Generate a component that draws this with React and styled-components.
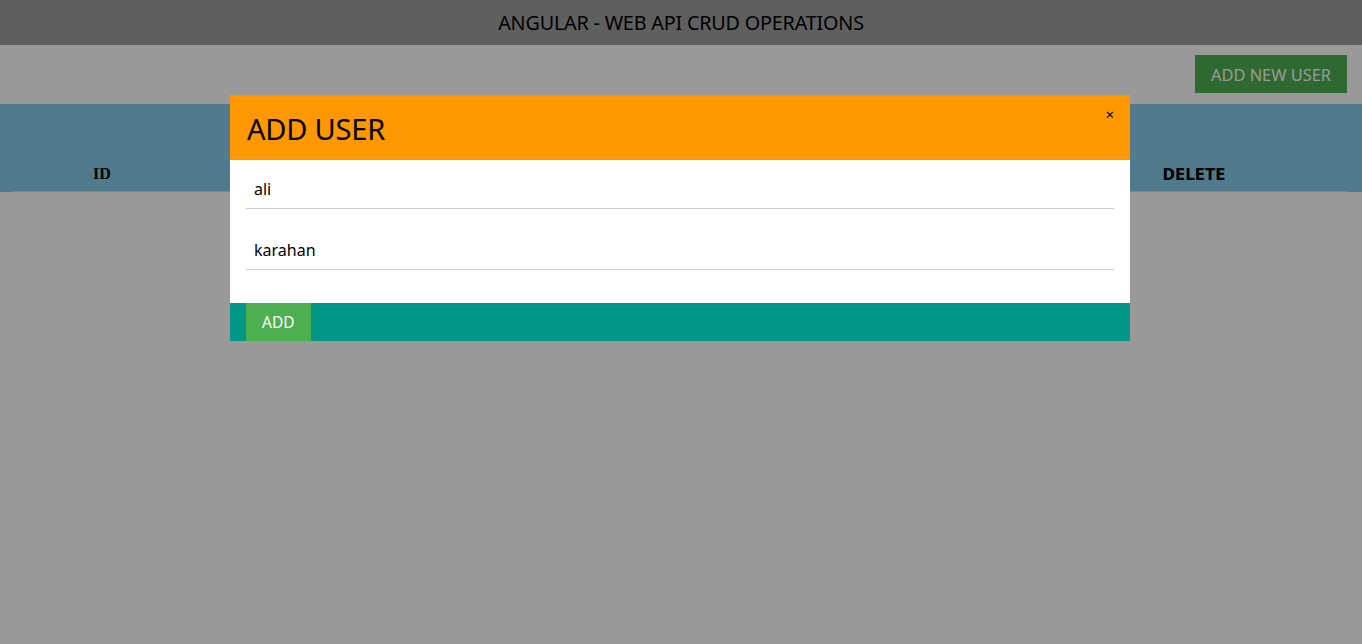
import React from "react";
import styled, { createGlobalStyle } from "styled-components";

const GlobalStyle = createGlobalStyle`
  body {
    margin: 0;
    background: #fff;
    font-family: "Noto Sans", "Open Sans", sans-serif;
  }
`;

const Page = styled.div`
  min-height: 644px;
  display: flex;
  flex-direction: column;
`;

const Header = styled.header`
  background-color: #9e9e9e;
  height: 45px;
  display: flex;
  justify-content: center;
  align-items: center;
  font-size: 19.8px;
  color: #000;
  letter-spacing: -0.2px;
`;

const Toolbar = styled.div`
  display: flex;
  justify-content: flex-end;
  padding: 10px 15px 11px 0;
`;

const GreenButton = styled.button`
  background-color: #4caf50;
  color: #fff;
  border: none;
  font-family: "Noto Sans", "Open Sans", sans-serif;
  font-size: ${(p) => p.fs || 15}px;
  padding: 0 16px;
  height: ${(p) => p.h || 38}px;
  cursor: pointer;
`;

const Table = styled.div`
  background-color: #87ceeb;
  height: 88px;
  display: grid;
  grid-template-columns: 178px 1fr 1fr 1fr 306px;
  align-items: end;
  padding: 0 15px 0 13px;
`;

const Th = styled.div`
  text-align: center;
  font-weight: bold;
  font-size: ${(p) => (p.serif ? 16 : 15)}px;
  font-family: ${(p) =>
    p.serif ? `"Liberation Serif", serif` : `"DejaVu Sans", sans-serif`};
  padding-bottom: ${(p) => (p.serif ? 8 : 6)}px;
  padding-top: ${(p) => (p.serif ? 2 : 4)}px;
  border-bottom: 1px solid #ddd;
  height: 19px;
  line-height: 19px;
`;

const Overlay = styled.div`
  position: fixed;
  inset: 0;
  background-color: rgba(0, 0, 0, 0.4);
  padding-top: 95px;
  display: flex;
  justify-content: center;
  align-items: flex-start;
`;

const Modal = styled.div`
  width: 900px;
  margin-left: -2px;
  background: #fff;
  display: flex;
  flex-direction: column;
`;

const ModalHead = styled.div`
  background-color: #ff9800;
  height: 65px;
  position: relative;
  display: flex;
  align-items: center;
  padding: 0 17px;
`;

const ModalTitle = styled.h2`
  margin: 2px 0 0;
  font-weight: normal;
  font-size: 29px;
  letter-spacing: -0.2px;
  color: #000;
`;

const Close = styled.span`
  position: absolute;
  top: 9px;
  right: 16px;
  font-size: 15px;
  color: #000;
  cursor: pointer;
`;

const Form = styled.div`
  padding: 13px 16px 33px;
  display: flex;
  flex-direction: column;
  gap: 25px;
`;

const Input = styled.input`
  box-sizing: border-box;
  border: none;
  border-bottom: 1px solid #ccc;
  height: 36px;
  padding: 0 8px 4px;
  font-family: "Noto Sans", "Open Sans", sans-serif;
  font-size: 16px;
  color: #000;
  outline: none;
`;

const Footer = styled.div`
  background-color: #009688;
  height: 38px;
  padding: 0 16px;
  display: flex;
`;

export default function App() {
  return (
    <>
      <GlobalStyle />
      <Page>
        <Header>ANGULAR - WEB API CRUD OPERATIONS</Header>
        <Toolbar>
          <GreenButton fs={16.4}>ADD NEW USER</GreenButton>
        </Toolbar>
        <Table>
          <Th serif>ID</Th>
          <Th>NAME</Th>
          <Th>SURNAME</Th>
          <Th>EDIT</Th>
          <Th>DELETE</Th>
        </Table>
      </Page>
      <Overlay>
        <Modal>
          <ModalHead>
            <ModalTitle>ADD USER</ModalTitle>
            <Close>×</Close>
          </ModalHead>
          <Form>
            <Input defaultValue="ali" />
            <Input defaultValue="karahan" />
          </Form>
          <Footer>
            <GreenButton fs={15.5}>ADD</GreenButton>
          </Footer>
        </Modal>
      </Overlay>
    </>
  );
}
